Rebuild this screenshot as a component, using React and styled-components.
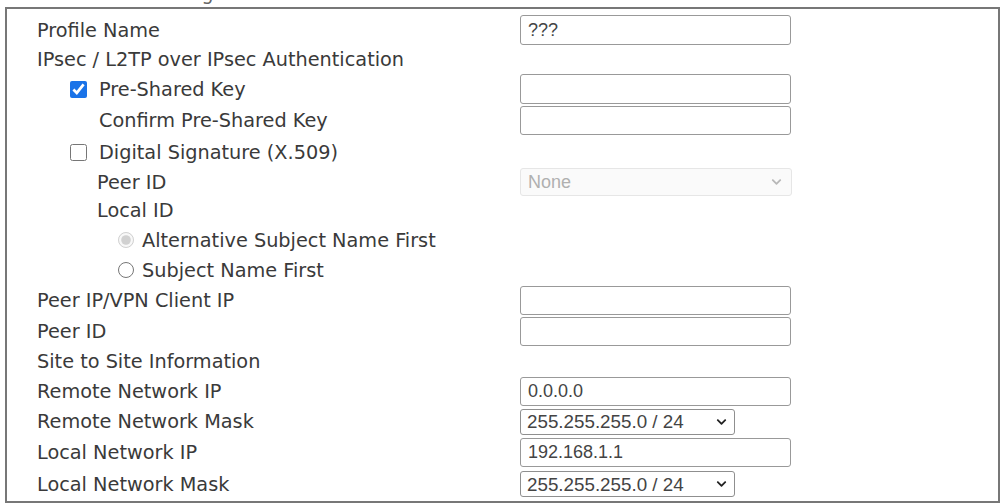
import React from 'react';
import styled, { createGlobalStyle } from 'styled-components';
import { FaChevronDown } from 'react-icons/fa';

const GlobalStyle = createGlobalStyle`
  body {
    margin: 0;
    background: #fff;
    font-family: 'DejaVu Sans', Verdana, sans-serif;
  }
`;

const rows = [
  { h: 30, label: 'Profile Name', field: { kind: 'text', value: '???', h: 30 } },
  { h: 29, label: 'IPsec / L2TP over IPsec Authentication' },
  { h: 30, label: 'Pre-Shared Key', indent: 33, check: true, field: { kind: 'text', value: '', h: 30 } },
  { h: 33, label: 'Confirm Pre-Shared Key', indent: 62, field: { kind: 'text', value: '', h: 29 } },
  { h: 31, label: 'Digital Signature (X.509)', indent: 33, check: false },
  { h: 28, label: 'Peer ID', indent: 60, field: { kind: 'disabled', value: 'None' } },
  { h: 29, label: 'Local ID', indent: 60 },
  { h: 30, label: 'Alternative Subject Name First', indent: 81, radio: 'disabled' },
  { h: 30, label: 'Subject Name First', indent: 81, radio: 'off' },
  { h: 31, label: 'Peer IP/VPN Client IP', field: { kind: 'text', value: '', h: 29 } },
  { h: 31, label: 'Peer ID', field: { kind: 'text', value: '', h: 29 } },
  { h: 29, label: 'Site to Site Information' },
  { h: 30, label: 'Remote Network IP', field: { kind: 'text', value: '0.0.0.0', h: 29 } },
  { h: 31, label: 'Remote Network Mask', field: { kind: 'mask', value: '255.255.255.0 / 24' } },
  { h: 31, label: 'Local Network IP', field: { kind: 'text', value: '192.168.1.1', h: 29 } },
  { h: 32, label: 'Local Network Mask', field: { kind: 'mask', value: '255.255.255.0 / 24' } },
];

const Field = ({ field }) => {
  if (field.kind === 'text') {
    return <TextInput $h={field.h} defaultValue={field.value} />;
  }
  if (field.kind === 'mask') {
    return (
      <SelectWrap>
        <MaskSelect defaultValue={field.value}>
          <option>{field.value}</option>
        </MaskSelect>
        <Chevron><FaChevronDown size={11} color="#222" /></Chevron>
      </SelectWrap>
    );
  }
  return (
    <SelectWrap>
      <DisabledSelect disabled defaultValue={field.value}>
        <option>{field.value}</option>
      </DisabledSelect>
      <Chevron $right={10}><FaChevronDown size={11} color="#b8b8b8" /></Chevron>
    </SelectWrap>
  );
};

const App = () => {
  return (<>
    <GlobalStyle />
    <Page>
      <Heading><Title>Dial-In Profile Setting</Title></Heading>
      <Box>
        {rows.map((r, i) => (
          <Row key={i} $h={r.h}>
            <Label $indent={r.indent || 0}>
              {r.check !== undefined && <Check type="checkbox" defaultChecked={r.check} />}
              {r.radio && <Radio type="radio" name="localid" disabled={r.radio === 'disabled'} defaultChecked={r.radio === 'disabled'} />}
              {r.label}
            </Label>
            <Value>{r.field && <Field field={r.field} />}</Value>
          </Row>
        ))}
      </Box>
    </Page>
  </>);
};

const Page = styled.div`
  padding: 0 1px 0 5px;
`;

const Heading = styled.div`
  height: 7px;
  overflow: hidden;
`;

const Title = styled.div`
  margin-top: -18px;
  padding-left: 8px;
  font-size: 19px;
  line-height: 22px;
  color: #666;
`;

const Box = styled.div`
  box-sizing: border-box;
  height: 496px;
  border: 2px solid #777;
  padding: 6px 0 0 30px;
`;

const Row = styled.div`
  display: grid;
  grid-template-columns: 483px 1fr;
  align-items: center;
  height: ${p => p.$h}px;
`;

const Label = styled.div`
  display: flex;
  align-items: center;
  padding-left: ${p => p.$indent}px;
  font-size: 19.3px;
  color: #3a3a3a;
  white-space: nowrap;
`;

const Value = styled.div`
  display: flex;
  align-items: center;
`;

const Check = styled.input`
  width: 17px;
  height: 17px;
  margin: 0 12px 0 0;
  accent-color: #1a73e8;
`;

const Radio = styled.input`
  width: 16px;
  height: 16px;
  margin: 0 8px 0 0;
`;

const TextInput = styled.input`
  box-sizing: border-box;
  width: 271px;
  height: ${p => p.$h}px;
  border: 1px solid #999;
  border-radius: 3px;
  padding: 0 7px;
  font-family: 'Liberation Sans', Arial, sans-serif;
  font-size: 18px;
  color: #444;
  background: #fff;
  outline: none;
`;

const SelectWrap = styled.div`
  position: relative;
  display: flex;
`;

const MaskSelect = styled.select`
  box-sizing: border-box;
  width: 215px;
  height: 26px;
  appearance: none;
  border: 1px solid #8f8f8f;
  border-radius: 3px;
  padding: 0 6px;
  font-family: 'Liberation Sans', Arial, sans-serif;
  font-size: 18.8px;
  color: #444;
  background: #fff;
`;

const DisabledSelect = styled.select`
  box-sizing: border-box;
  width: 272px;
  height: 28px;
  appearance: none;
  border: 1px solid #e6e6e6;
  border-radius: 3px;
  padding: 0 7px;
  font-family: 'Liberation Sans', Arial, sans-serif;
  font-size: 18px;
  color: #b0b0b0;
  background: #fafafa;
  opacity: 1;
`;

const Chevron = styled.span`
  position: absolute;
  right: ${p => p.$right || 8}px;
  top: 50%;
  transform: translateY(-50%);
  display: flex;
  pointer-events: none;
`;

export default App;
